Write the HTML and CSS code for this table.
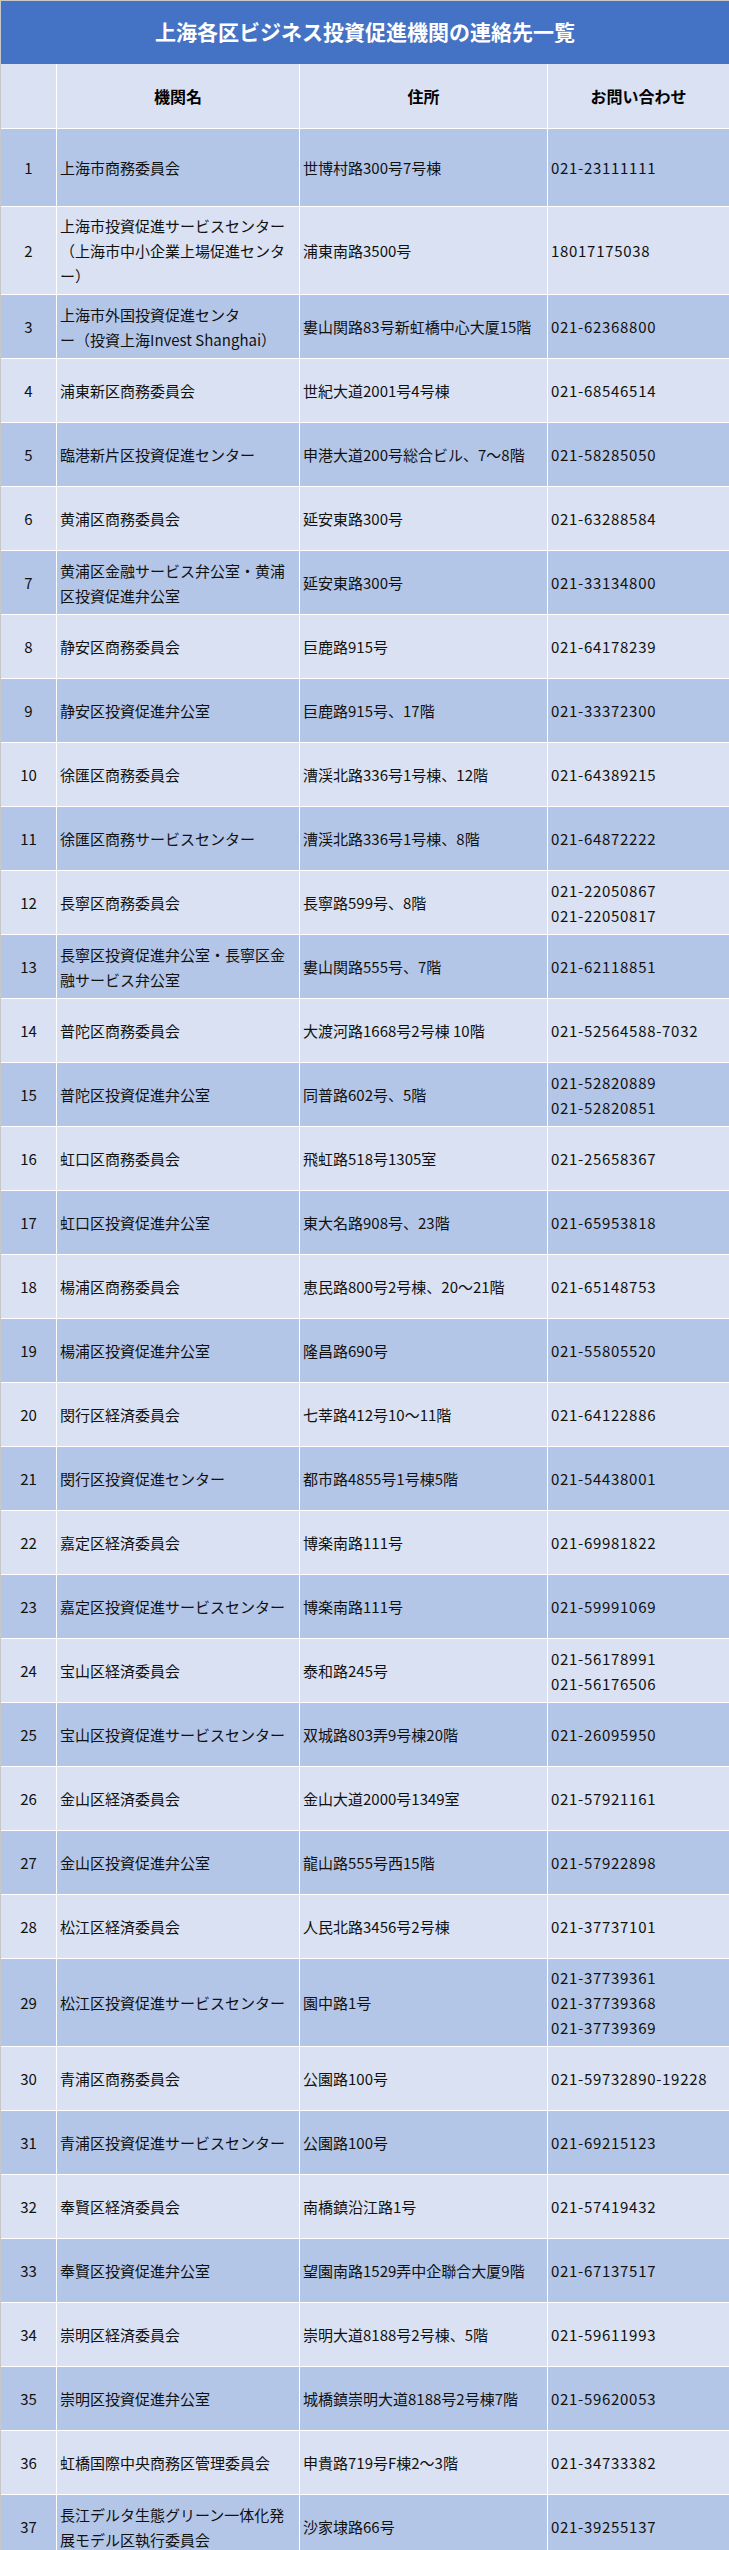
FILE: index.html
```html
<!DOCTYPE html>
<html lang="ja">
<head>
<meta charset="utf-8">
<title>上海各区ビジネス投資促進機関の連絡先一覧</title>
<link rel="stylesheet" href="styles.css">
</head>
<body>
<div class="sheet">
  <div class="title">上海各区ビジネス投資促進機関の連絡先一覧</div>
  <div class="grid">
    <div class="row head"><div class="cell"></div><div class="cell"><span>機関名</span></div><div class="cell"><span>住所</span></div><div class="cell"><span>お問い合わせ</span></div></div>
    <div class="row odd r1"><div class="cell num"><span>1</span></div><div class="cell"><span>上海市商務委員会</span></div><div class="cell"><span>世博村路300号7号棟</span></div><div class="cell tel"><span>021-23111111</span></div></div>
    <div class="row even"><div class="cell num"><span>2</span></div><div class="cell"><span class="nw">上海市投資促進サービスセンター<br>（上海市中小企業上場促進センタ<br>ー）</span></div><div class="cell"><span>浦東南路3500号</span></div><div class="cell tel"><span>18017175038</span></div></div>
    <div class="row odd"><div class="cell num"><span>3</span></div><div class="cell"><span class="nw">上海市外国投資促進センタ<br>ー（投資上海Invest Shanghai）</span></div><div class="cell"><span class="nw">婁山関路83号新虹橋中心大厦15階</span></div><div class="cell tel"><span>021-62368800</span></div></div>
    <div class="row even"><div class="cell num"><span>4</span></div><div class="cell"><span>浦東新区商務委員会</span></div><div class="cell"><span>世紀大道2001号4号棟</span></div><div class="cell tel"><span>021-68546514</span></div></div>
    <div class="row odd"><div class="cell num"><span>5</span></div><div class="cell"><span>臨港新片区投資促進センター</span></div><div class="cell"><span class="nw">申港大道200号総合ビル、7～8階</span></div><div class="cell tel"><span>021-58285050</span></div></div>
    <div class="row even"><div class="cell num"><span>6</span></div><div class="cell"><span>黄浦区商務委員会</span></div><div class="cell"><span>延安東路300号</span></div><div class="cell tel"><span>021-63288584</span></div></div>
    <div class="row odd"><div class="cell num"><span>7</span></div><div class="cell"><span class="nw">黄浦区金融サービス弁公室・黄浦<br>区投資促進弁公室</span></div><div class="cell"><span>延安東路300号</span></div><div class="cell tel"><span>021-33134800</span></div></div>
    <div class="row even"><div class="cell num"><span>8</span></div><div class="cell"><span>静安区商務委員会</span></div><div class="cell"><span>巨鹿路915号</span></div><div class="cell tel"><span>021-64178239</span></div></div>
    <div class="row odd"><div class="cell num"><span>9</span></div><div class="cell"><span>静安区投資促進弁公室</span></div><div class="cell"><span>巨鹿路915号、17階</span></div><div class="cell tel"><span>021-33372300</span></div></div>
    <div class="row even"><div class="cell num"><span>10</span></div><div class="cell"><span>徐匯区商務委員会</span></div><div class="cell"><span>漕渓北路336号1号棟、12階</span></div><div class="cell tel"><span>021-64389215</span></div></div>
    <div class="row odd"><div class="cell num"><span>11</span></div><div class="cell"><span>徐匯区商務サービスセンター</span></div><div class="cell"><span>漕渓北路336号1号棟、8階</span></div><div class="cell tel"><span>021-64872222</span></div></div>
    <div class="row even"><div class="cell num"><span>12</span></div><div class="cell"><span>長寧区商務委員会</span></div><div class="cell"><span>長寧路599号、8階</span></div><div class="cell tel"><span>021-22050867<br>021-22050817</span></div></div>
    <div class="row odd"><div class="cell num"><span>13</span></div><div class="cell"><span class="nw">長寧区投資促進弁公室・長寧区金<br>融サービス弁公室</span></div><div class="cell"><span>婁山関路555号、7階</span></div><div class="cell tel"><span>021-62118851</span></div></div>
    <div class="row even"><div class="cell num"><span>14</span></div><div class="cell"><span>普陀区商務委員会</span></div><div class="cell"><span>大渡河路1668号2号棟 10階</span></div><div class="cell tel"><span>021-52564588-7032</span></div></div>
    <div class="row odd"><div class="cell num"><span>15</span></div><div class="cell"><span>普陀区投資促進弁公室</span></div><div class="cell"><span>同普路602号、5階</span></div><div class="cell tel"><span>021-52820889<br>021-52820851</span></div></div>
    <div class="row even"><div class="cell num"><span>16</span></div><div class="cell"><span>虹口区商務委員会</span></div><div class="cell"><span>飛虹路518号1305室</span></div><div class="cell tel"><span>021-25658367</span></div></div>
    <div class="row odd"><div class="cell num"><span>17</span></div><div class="cell"><span>虹口区投資促進弁公室</span></div><div class="cell"><span>東大名路908号、23階</span></div><div class="cell tel"><span>021-65953818</span></div></div>
    <div class="row even"><div class="cell num"><span>18</span></div><div class="cell"><span>楊浦区商務委員会</span></div><div class="cell"><span>恵民路800号2号棟、20～21階</span></div><div class="cell tel"><span>021-65148753</span></div></div>
    <div class="row odd"><div class="cell num"><span>19</span></div><div class="cell"><span>楊浦区投資促進弁公室</span></div><div class="cell"><span>隆昌路690号</span></div><div class="cell tel"><span>021-55805520</span></div></div>
    <div class="row even"><div class="cell num"><span>20</span></div><div class="cell"><span>閔行区経済委員会</span></div><div class="cell"><span>七莘路412号10～11階</span></div><div class="cell tel"><span>021-64122886</span></div></div>
    <div class="row odd"><div class="cell num"><span>21</span></div><div class="cell"><span>閔行区投資促進センター</span></div><div class="cell"><span>都市路4855号1号棟5階</span></div><div class="cell tel"><span>021-54438001</span></div></div>
    <div class="row even"><div class="cell num"><span>22</span></div><div class="cell"><span>嘉定区経済委員会</span></div><div class="cell"><span>博楽南路111号</span></div><div class="cell tel"><span>021-69981822</span></div></div>
    <div class="row odd"><div class="cell num"><span>23</span></div><div class="cell"><span>嘉定区投資促進サービスセンター</span></div><div class="cell"><span>博楽南路111号</span></div><div class="cell tel"><span>021-59991069</span></div></div>
    <div class="row even"><div class="cell num"><span>24</span></div><div class="cell"><span>宝山区経済委員会</span></div><div class="cell"><span>泰和路245号</span></div><div class="cell tel"><span>021-56178991<br>021-56176506</span></div></div>
    <div class="row odd"><div class="cell num"><span>25</span></div><div class="cell"><span>宝山区投資促進サービスセンター</span></div><div class="cell"><span>双城路803弄9号棟20階</span></div><div class="cell tel"><span>021-26095950</span></div></div>
    <div class="row even"><div class="cell num"><span>26</span></div><div class="cell"><span>金山区経済委員会</span></div><div class="cell"><span>金山大道2000号1349室</span></div><div class="cell tel"><span>021-57921161</span></div></div>
    <div class="row odd"><div class="cell num"><span>27</span></div><div class="cell"><span>金山区投資促進弁公室</span></div><div class="cell"><span>龍山路555号西15階</span></div><div class="cell tel"><span>021-57922898</span></div></div>
    <div class="row even"><div class="cell num"><span>28</span></div><div class="cell"><span>松江区経済委員会</span></div><div class="cell"><span>人民北路3456号2号棟</span></div><div class="cell tel"><span>021-37737101</span></div></div>
    <div class="row odd"><div class="cell num"><span>29</span></div><div class="cell"><span>松江区投資促進サービスセンター</span></div><div class="cell"><span>園中路1号</span></div><div class="cell tel"><span>021-37739361<br>021-37739368<br>021-37739369</span></div></div>
    <div class="row even"><div class="cell num"><span>30</span></div><div class="cell"><span>青浦区商務委員会</span></div><div class="cell"><span>公園路100号</span></div><div class="cell tel"><span class="nw">021-59732890-19228</span></div></div>
    <div class="row odd"><div class="cell num"><span>31</span></div><div class="cell"><span>青浦区投資促進サービスセンター</span></div><div class="cell"><span>公園路100号</span></div><div class="cell tel"><span>021-69215123</span></div></div>
    <div class="row even"><div class="cell num"><span>32</span></div><div class="cell"><span>奉賢区経済委員会</span></div><div class="cell"><span>南橋鎮沿江路1号</span></div><div class="cell tel"><span>021-57419432</span></div></div>
    <div class="row odd"><div class="cell num"><span>33</span></div><div class="cell"><span>奉賢区投資促進弁公室</span></div><div class="cell"><span class="nw">望園南路1529弄中企聯合大厦9階</span></div><div class="cell tel"><span>021-67137517</span></div></div>
    <div class="row even"><div class="cell num"><span>34</span></div><div class="cell"><span>崇明区経済委員会</span></div><div class="cell"><span>崇明大道8188号2号棟、5階</span></div><div class="cell tel"><span>021-59611993</span></div></div>
    <div class="row odd"><div class="cell num"><span>35</span></div><div class="cell"><span>崇明区投資促進弁公室</span></div><div class="cell"><span class="nw">城橋鎮崇明大道8188号2号棟7階</span></div><div class="cell tel"><span>021-59620053</span></div></div>
    <div class="row even"><div class="cell num"><span>36</span></div><div class="cell"><span>虹橋国際中央商務区管理委員会</span></div><div class="cell"><span>申貴路719号F棟2～3階</span></div><div class="cell tel"><span>021-34733382</span></div></div>
    <div class="row odd"><div class="cell num"><span>37</span></div><div class="cell"><span class="nw">長江デルタ生態グリーン一体化発<br>展モデル区執行委員会</span></div><div class="cell"><span>沙家埭路66号</span></div><div class="cell tel"><span>021-39255137</span></div></div>
  </div>
</div>
</body>
</html>
```

FILE: styles.css
```css
html, body {
  margin: 0;
  padding: 0;
  background: #ffffff;
}

body {
  font-family: "Noto Sans CJK JP", "Noto Sans", sans-serif;
  color: #111111;
}

.sheet {
  width: 728px;
  border-top: 1px solid #c8c8c8;
  border-left: 1px solid #c8c8c8;
}

.title {
  height: 63px;
  box-sizing: border-box;
  padding-bottom: 4px;
  background: #4472c4;
  color: #ffffff;
  font-weight: 700;
  font-size: 21px;
  display: flex;
  align-items: center;
  justify-content: center;
}

.grid {
  display: flex;
  flex-direction: column;
  gap: 1px;
  background: #ffffff;
}

.row {
  display: grid;
  grid-template-columns: 55px 242px 247px 1fr;
  gap: 1px;
  min-height: 63px;
}

.row.head {
  min-height: 64px;
}

.row.r1 {
  min-height: 77px;
}

.cell {
  display: flex;
  align-items: center;
  padding: 6px 3px;
  font-size: 15px;
  line-height: 25px;
  min-width: 0;
}

.row.head .cell {
  background: #d9e1f2;
  justify-content: center;
  font-weight: 700;
  font-size: 16px;
  color: #000000;
}

.row.odd .cell {
  background: #b4c6e7;
}

.row.even .cell {
  background: #d9e1f2;
}

.cell.num {
  justify-content: center;
}

.cell.tel {
  letter-spacing: 0.7px;
}

.nw {
  white-space: nowrap;
}
```
